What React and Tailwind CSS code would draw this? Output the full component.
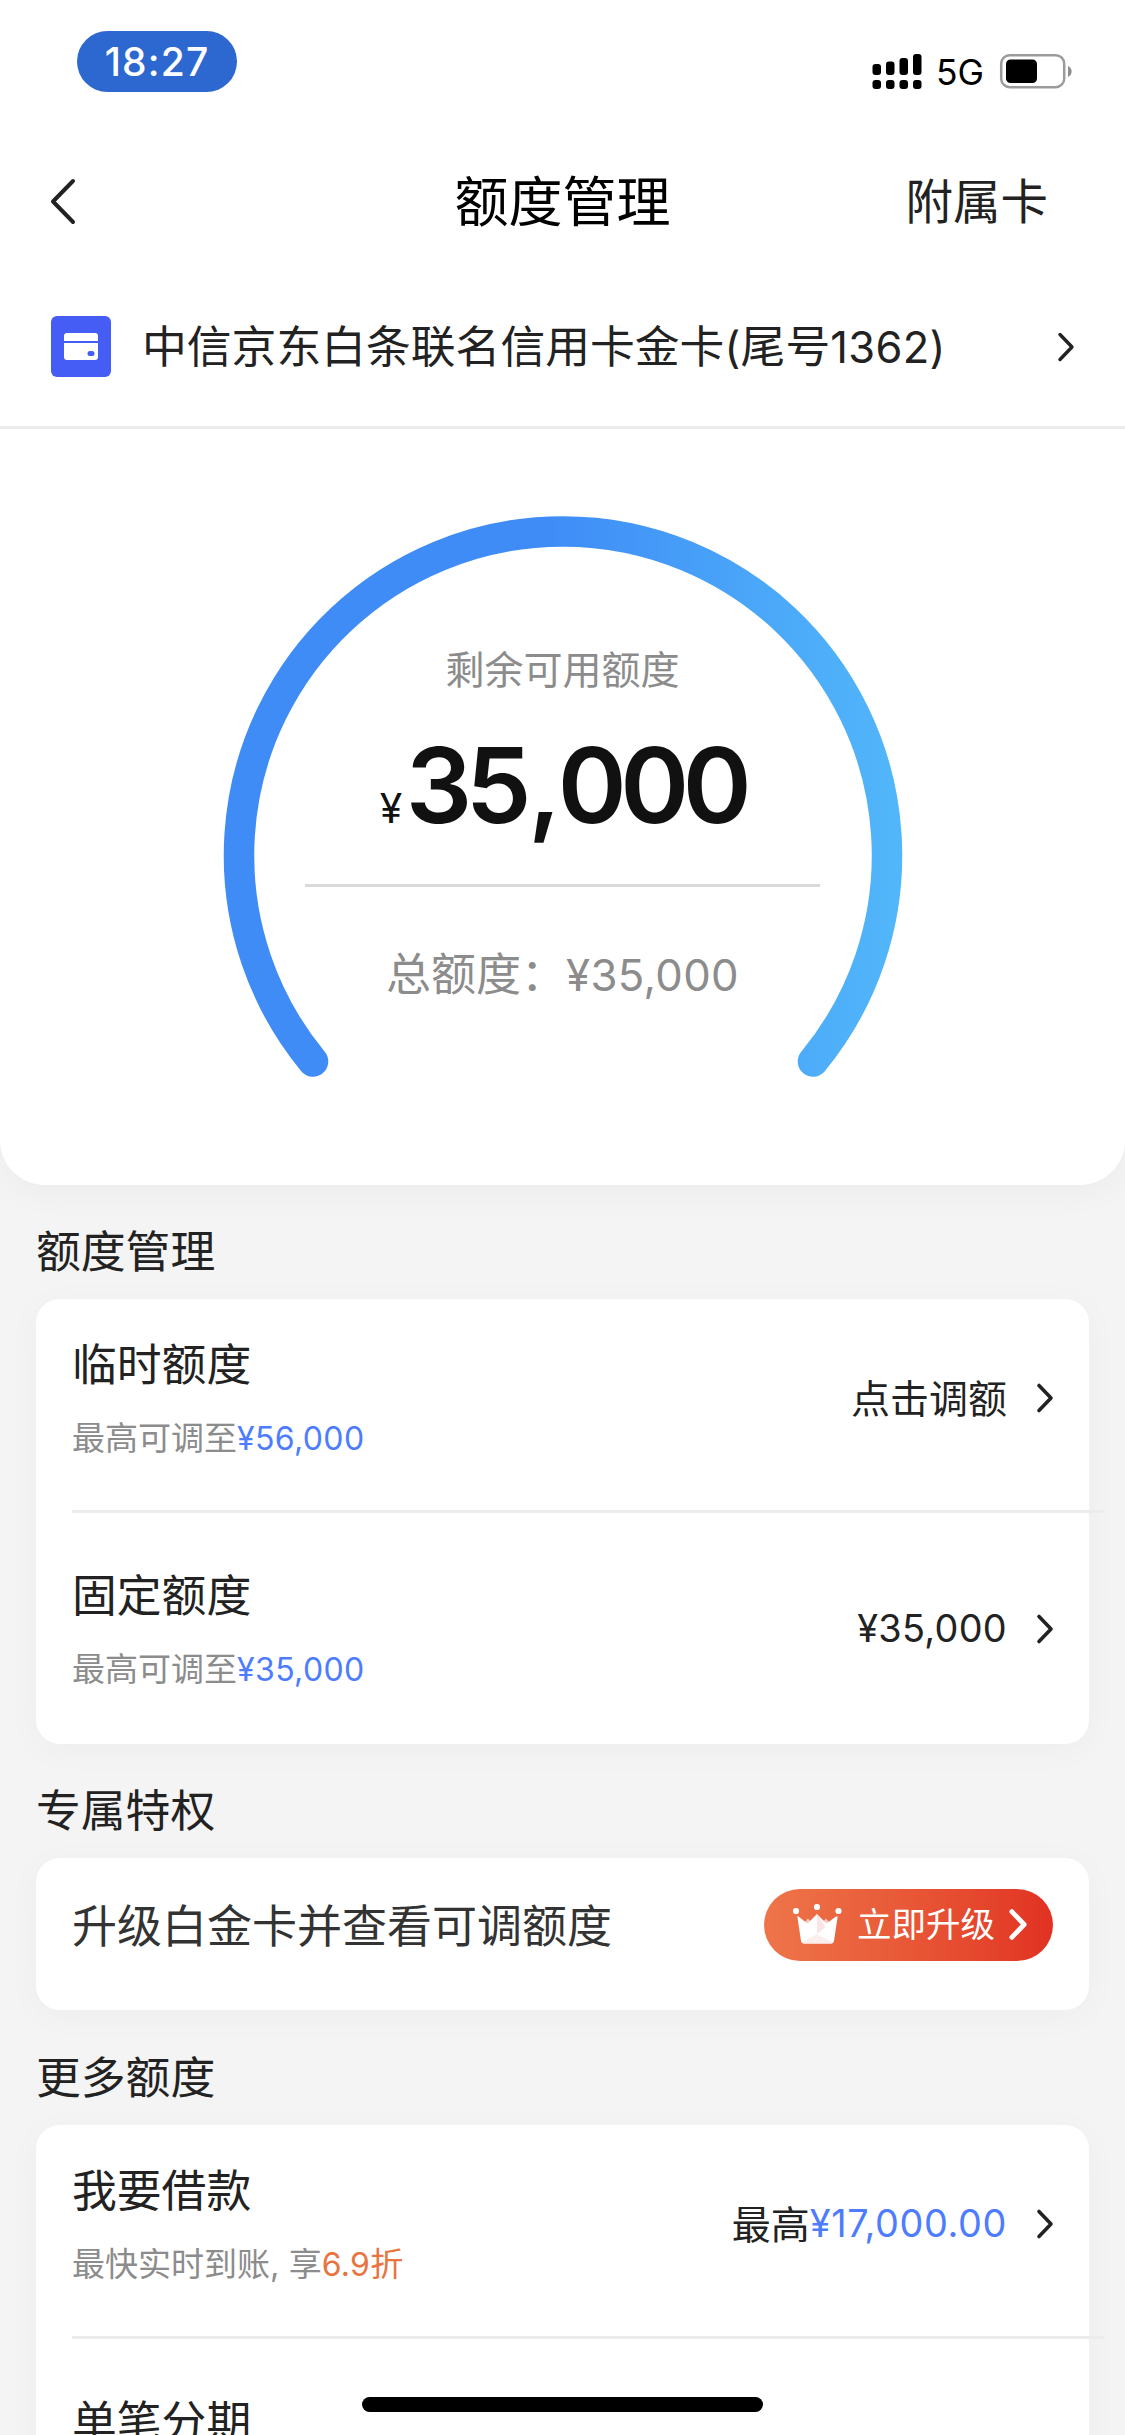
const sections = [
  {
    title: "额度管理",
    rows: [
      {
        name: "临时额度",
        hint: "最高可调至",
        amount: "¥56,000",
        value: "点击调额",
      },
      {
        name: "固定额度",
        hint: "最高可调至",
        amount: "¥35,000",
        valueAmount: "¥35,000",
      },
    ],
  },
  {
    title: "更多额度",
    rows: [
      {
        name: "我要借款",
        hint: "最快实时到账, 享",
        discount: "6.9",
        value: "最高",
        highlight: "¥17,000.00",
      },
      { name: "单笔分期" },
    ],
  },
];

// Latin digits run slightly smaller than the Chinese text beside them
function Num({ children, className = "tracking-[0.008em]" }) {
  return <span className={`text-[0.97em] ${className}`}>{children}</span>;
}

function Chevron({ className = "w-[18px] h-8", strokeWidth = 3.6 }) {
  return (
    <svg
      viewBox="0 0 18 32"
      className={`shrink-0 ${className}`}
      fill="none"
      stroke="currentColor"
      strokeWidth={strokeWidth}
      strokeLinecap="round"
      strokeLinejoin="round"
    >
      <path d="M3 3.5L15 16L3 28.5" />
    </svg>
  );
}

function StatusBar() {
  return (
    <div className="flex h-[120px] items-start justify-between pl-[77px] pr-[53px]">
      <div className="mt-[31px] flex h-[61px] w-40 items-center justify-center rounded-full bg-[#2d67d0] text-[39px] font-medium tracking-[0.03em] text-white">
        18:27
      </div>
      <div className="mt-[53px] flex h-9 items-center text-black">
        <svg width="50" height="36" viewBox="0 0 50 36" fill="currentColor">
          <rect x="0.5" y="11" width="8.5" height="11" rx="3" />
          <rect x="14" y="8.5" width="8.5" height="13.5" rx="3" />
          <rect x="27.5" y="5" width="8.5" height="17" rx="3" />
          <rect x="41" y="1" width="8.5" height="21" rx="3" />
          <rect x="0.5" y="27" width="8.5" height="9" rx="3" />
          <rect x="14" y="27" width="8.5" height="9" rx="3" />
          <rect x="27.5" y="27" width="8.5" height="9" rx="3" />
          <rect x="41" y="27" width="8.5" height="9" rx="3" />
        </svg>
        <span className="ml-3.5 mt-1 w-[63px] text-[35.5px]">5G</span>
        <svg width="73" height="36" viewBox="0 0 73 36">
          <rect
            x="2.2"
            y="2.2"
            width="63"
            height="32"
            rx="8.5"
            fill="none"
            stroke="#9b9b9b"
            strokeWidth="2.5"
          />
          <rect x="7" y="6.5" width="31" height="23.5" rx="4.5" />
          <path d="M69 13a6 6 0 0 1 0 11z" fill="#8e8e8e" />
        </svg>
      </div>
    </div>
  );
}

function NavBar() {
  return (
    <div className="grid h-[164px] grid-cols-3 items-center pl-[49px] pr-[77px]">
      <svg
        width="28"
        height="50"
        viewBox="0 0 28 50"
        fill="none"
        stroke="#222"
        strokeWidth="4"
        strokeLinecap="round"
        strokeLinejoin="round"
      >
        <path d="M24 4L4 24.500L24 45" />
      </svg>
      <h1 className="ml-7 pt-px text-center text-[54px] text-black">额度管理</h1>
      <div className="pb-px text-right text-[47.5px] text-[#222]">附属卡</div>
    </div>
  );
}

function CardPicker() {
  return (
    <div className="flex h-[145px] items-center border-b-[3px] border-[#ececec] pb-[17px] pl-[51px] pr-[50px] text-[#222]">
      <svg width="60" height="61" viewBox="0 0 60 61">
        <rect width="60" height="61" rx="6" fill="#455cf5" />
        <path
          d="M16 17h28a3 3 0 0 1 3 3v5H13v-5a3 3 0 0 1 3-3zM13 27h34v14a3 3 0 0 1-3 3H16a3 3 0 0 1-3-3z"
          fill="#fff"
        />
        <rect x="36.500" y="35" width="7" height="5" rx="2.500" fill="#455cf5" />
      </svg>
      <span className="ml-[31px] flex-1 whitespace-nowrap pt-0.5 text-[44.8px]">
        中信京东白条联名信用卡金卡<Num>(</Num>尾号<Num>1362)</Num>
      </span>
      <Chevron className="h-[34px] w-[18px]" strokeWidth={3.4} />
    </div>
  );
}

function LimitGauge() {
  return (
    <div className="grid h-[756px] justify-center">
      <svg
        width="680"
        height="580"
        viewBox="0 0 680 580"
        fill="none"
        className="col-start-1 row-start-1 mt-[87px]"
      >
        <defs>
          <linearGradient id="gauge" x1="0" y1="0" x2="680" y2="0" gradientUnits="userSpaceOnUse">
            <stop offset="0.48" stopColor="#3f8cf7" />
            <stop offset="0.8" stopColor="#4ba8f9" />
            <stop offset="1" stopColor="#52b7fa" />
          </linearGradient>
        </defs>
        <path
          d="M90 545.500A324 324 0 1 1 590 545.500"
          stroke="url(#gauge)"
          strokeWidth="30.500"
          strokeLinecap="round"
        />
      </svg>
      <div className="col-start-1 row-start-1 flex flex-col items-center pt-[216px] text-[#8c8c8c]">
        <div className="h-[50px] text-[39px] leading-[50px]">剩余可用额度</div>
        <div className="mt-[30px] flex h-[120px] items-baseline leading-[120px] text-[#111]">
          <span className="inline-block w-[26px] text-[41px]">¥</span>
          <span className="text-[104.5px] font-semibold tracking-[-0.062em]">
            35<span className="mx-[3px]">,</span>000
          </span>
        </div>
        <div className="mt-[39px] h-[3px] w-[515px] bg-[#d9d9d9]" />
        <div className="mt-[60px] h-[56px] text-[45px] leading-[56px]">
          总额度：<Num>¥35,000</Num>
        </div>
      </div>
    </div>
  );
}

function SectionTitle({ children }) {
  return (
    <h2 className="flex h-[114px] items-center px-9 pt-[21px] text-[44.8px] text-[#222]">
      {children}
    </h2>
  );
}

function LimitRow({ row, last }) {
  return (
    <div className="flex h-[231px] pl-9">
      <div
        className={`-mr-[15px] flex flex-1 justify-between pr-[50px] ${
          last ? "" : "border-b-[3px] border-[#ececec]"
        }`}
      >
        <div className="pt-[53px]">
          <div className="h-[60px] text-[44.8px] leading-[60px] text-[#222]">
            {row.name}
          </div>
          <div className="mt-[23px] h-10 text-[33px] leading-10 text-[#8c8c8c]">
            {row.hint}
            {row.amount && (
              <Num className="tracking-[0.012em] text-[#4d7cfe]">
                {row.amount}
              </Num>
            )}
            {row.discount && (
              <span className="text-[#e8743f]">
                <Num>{row.discount}</Num>折
              </span>
            )}
          </div>
        </div>
        {(row.value || row.valueAmount) && (
          <div className="mt-[86px] flex h-[60px] items-center text-[39px] text-[#222]">
            {row.value}
            {row.valueAmount && <Num>{row.valueAmount}</Num>}
            {row.highlight && (
              <Num className="tracking-[0.016em] text-[#4d7cfe]">
                {row.highlight}
              </Num>
            )}
            <Chevron className="ml-[29px] h-8 w-[18px]" />
          </div>
        )}
      </div>
    </div>
  );
}

function LimitSection({ section }) {
  return (
    <section>
      <SectionTitle>{section.title}</SectionTitle>
      <div className="mx-9 h-[445px] rounded-[24px] bg-white shadow-[0_6px_36px_rgba(0,0,0,0.03)]">
        <div className="-translate-y-[17px]">
          {section.rows.map((row, i) => (
            <LimitRow
              key={row.name}
              row={row}
              last={i === section.rows.length - 1}
            />
          ))}
        </div>
      </div>
    </section>
  );
}

function CrownIcon() {
  return (
    <svg width="50" height="44" viewBox="0 0 50 44" fill="#fff">
      <circle cx="4" cy="8" r="3.100" />
      <circle cx="25" cy="4" r="3.100" />
      <circle cx="46.500" cy="8" r="3.100" />
      <path d="M11 21l5-5.500 5 5.500zM29 21l5-5.500 5 5.500z" fill="#f8c8bd" />
      <path d="M5.500 14.500Q4.500 12.500 6.500 13.500L15.500 20.500L25 11L34.500 20.500L44 13.500Q46 12.500 45.500 14.500L42 38a3 3 0 0 1-3 2.500H12a3 3 0 0 1-3-2.500z" />
      <path d="M25 11V31l8.500-7z" fill="#fce4e4" />
      <path d="M25 31l16 8.500q-1 1-2 1H12q-1.500 0-2-1z" fill="#fdeeee" />
    </svg>
  );
}

function UpgradeSection() {
  return (
    <section>
      <SectionTitle>专属特权</SectionTitle>
      <div className="mx-9 mb-px flex h-[152px] items-center justify-between rounded-[24px] bg-white pb-[19px] pl-9 pr-9 shadow-[0_6px_36px_rgba(0,0,0,0.03)]">
        <span className="pt-1 text-[45px] text-[#333]">
          升级白金卡并查看可调额度
        </span>
        <button className="flex h-[72px] w-[289px] items-center rounded-full bg-gradient-to-r from-[#ee7549] to-[#e13122] pl-7 text-white">
          <CrownIcon />
          <span className="ml-[15px] pt-0.5 text-[34.5px]">立即升级</span>
          <Chevron className="ml-[13px] h-[33px] w-5" strokeWidth={4.6} />
        </button>
      </div>
    </section>
  );
}

export default function App() {
  return (
    <div className="relative h-[2435px] w-[1125px] overflow-hidden bg-[#f4f4f4] font-[Inter,'Noto_Sans_CJK_SC',sans-serif] leading-none">
      <header className="rounded-b-[45px] bg-white shadow-[0_6px_36px_rgba(0,0,0,0.04)]">
        <StatusBar />
        <NavBar />
        <CardPicker />
        <LimitGauge />
      </header>
      <main>
        <LimitSection section={sections[0]} />
        <UpgradeSection />
        <LimitSection section={sections[1]} />
      </main>
      {/* home indicator */}
      <div className="absolute bottom-[23px] left-[362px] h-[15px] w-[401px] rounded-full bg-black" />
    </div>
  );
}
